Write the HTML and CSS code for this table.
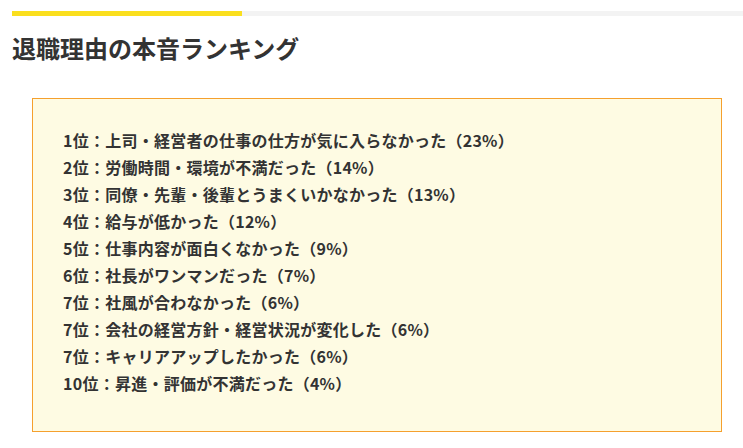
FILE: index.html
```html
<!DOCTYPE html>
<html lang="ja">
<head>
<meta charset="utf-8">
<link rel="stylesheet" href="styles.css">
</head>
<body>
<div class="page">
  <div class="rule"><div class="rule-fill"></div></div>
  <h2 class="title">退職理由の本音ランキング</h2>
  <div class="box">
    <ul class="rank">
      <li>1位：上司・経営者の仕事の仕方が気に入らなかった（23%）</li>
      <li>2位：労働時間・環境が不満だった（14%）</li>
      <li>3位：同僚・先輩・後輩とうまくいかなかった（13%）</li>
      <li>4位：給与が低かった（12%）</li>
      <li>5位：仕事内容が面白くなかった（9%）</li>
      <li>6位：社長がワンマンだった（7%）</li>
      <li>7位：社風が合わなかった（6%）</li>
      <li>7位：会社の経営方針・経営状況が変化した（6%）</li>
      <li>7位：キャリアアップしたかった（6%）</li>
      <li>10位：昇進・評価が不満だった（4%）</li>
    </ul>
  </div>
</div>
</body>
</html>
```
FILE: styles.css
```css
html, body { margin: 0; padding: 0; background: #fff; }
body {
  font-family: "Noto Sans CJK JP", "Noto Sans", sans-serif;
  color: #333;
  text-spacing-trim: space-all;
}
.page { padding: 11px 0 0 12px; }
.rule {
  height: 5px;
  background: #f3f3f3;
}
.rule-fill {
  width: 230px;
  height: 100%;
  background: #fadf1e;
}
.title {
  margin: 16px 0 0 0;
  font-size: 24px;
  line-height: 32px;
  font-weight: bold;
  color: #333;
}
.box {
  margin: 34px 0 0 20px;
  width: 690px;
  height: 334px;
  box-sizing: border-box;
  border: 1px solid #f5a02d;
  background: #fefbe3;
  padding: 28px 0 0 30px;
}
.rank {
  list-style: none;
  margin: 0;
  padding: 0;
}
.rank li {
  font-size: 16px;
  font-weight: bold;
  line-height: 27px;
  letter-spacing: 0.25px;
}
```
